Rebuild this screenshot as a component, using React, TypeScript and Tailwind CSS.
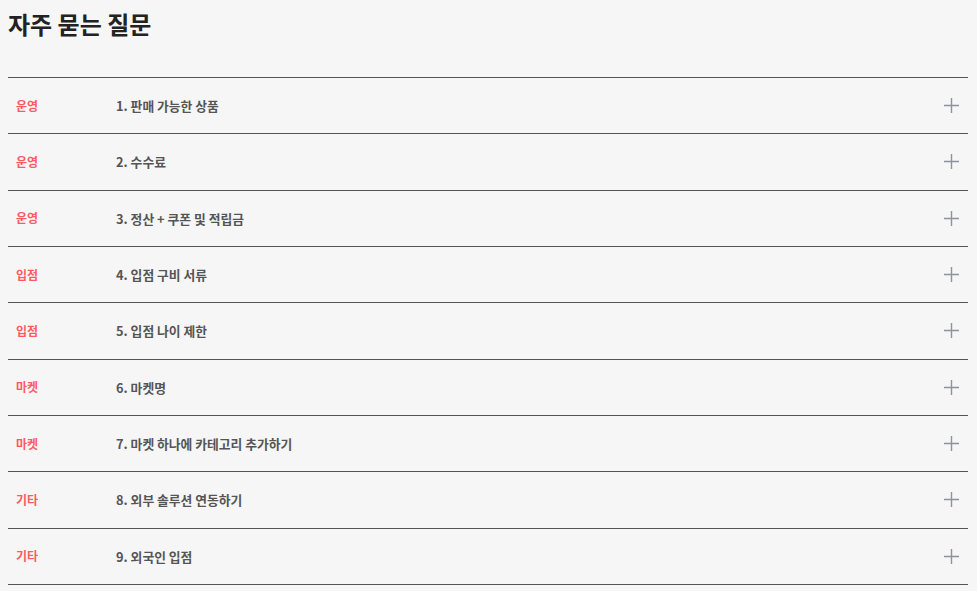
const faqs = [
  { cat: "운영", q: "1. 판매 가능한 상품" },
  { cat: "운영", q: "2. 수수료" },
  { cat: "운영", q: "3. 정산 + 쿠폰 및 적립금" },
  { cat: "입점", q: "4. 입점 구비 서류" },
  { cat: "입점", q: "5. 입점 나이 제한" },
  { cat: "마켓", q: "6. 마켓명" },
  { cat: "마켓", q: "7. 마켓 하나에 카테고리 추가하기" },
  { cat: "기타", q: "8. 외부 솔루션 연동하기" },
  { cat: "기타", q: "9. 외국인 입점" },
];

const PlusIcon = () => (
  <svg width="15" height="15" viewBox="0 0 15 15" className="text-[#8a939e]">
    <path d="M0 7.5H15M7.5 0V15" stroke="currentColor" strokeWidth="1.4" />
  </svg>
);

export default function App() {
  return (
    <div className="min-h-[591px] bg-[#f6f6f6] px-2 pt-[6px] font-['Noto_Sans_CJK_KR','Noto_Sans',sans-serif]">
      <h1 className="text-[24px] font-bold leading-[36px] text-[#222]">자주 묻는 질문</h1>
      <ul className="mt-[35px] mr-[1px] border-t border-[#555]">
        {faqs.map((f) => (
          <li
            key={f.q}
            className="flex h-[56.34px] items-center border-b border-[#555] pl-2 pr-[9px]"
          >
            <span className="w-[100px] text-[12px] font-bold text-[#ff5a5f]">{f.cat}</span>
            <span className="flex-1 text-[12.8px] font-bold text-[#555]">{f.q}</span>
            <PlusIcon />
          </li>
        ))}
      </ul>
    </div>
  );
}
